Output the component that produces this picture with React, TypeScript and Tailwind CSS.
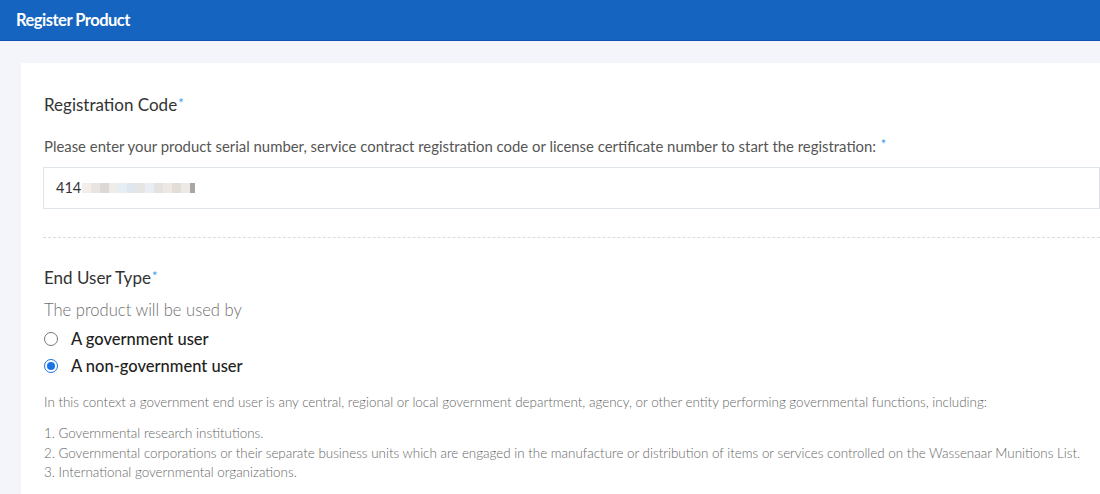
import React from "react";

const Star = () => (
  <span className="text-[#3d9bf0] text-[13px] align-top relative -top-[2px] ml-[1px]">*</span>
);

function Radio({ checked }: { checked: boolean }) {
  return checked ? (
    <span className="w-[14px] h-[14px] rounded-full border-[1.5px] border-[#1a73e8] flex items-center justify-center shrink-0">
      <span className="w-[8px] h-[8px] rounded-full bg-[#1a73e8]" />
    </span>
  ) : (
    <span className="w-[14px] h-[14px] rounded-full border-[1.5px] border-[#767676] shrink-0" />
  );
}

export default function App() {
  return (
    <div className="w-[1100px] h-[494px] overflow-hidden bg-[#f4f5fa] font-['Lato','Liberation_Sans',sans-serif]">
      <div className="h-[41px] bg-[#1565c0] border-b border-[#0d55b0] flex items-center px-4">
        <span className="text-white text-[16.5px] font-bold tracking-[-0.5px]">Register Product</span>
      </div>
      <div className="pl-[21px] pt-[22px]">
        <div className="bg-white pl-[23px] pt-[31px] pb-6 min-h-[500px]">
          <div className="text-[17px] text-[#333] leading-[22px]">
            Registration Code<Star />
          </div>
          <div className="mt-[20px] text-[14.9px] text-[#555] leading-[20px]">
            Please enter your product serial number, service contract registration code or license certificate number to start the registration:{" "}
            <Star />
          </div>
          <div className="mt-[11px] -ml-[1px] h-[42px] border border-[#dfe3ea] flex items-center pl-[12px] text-[14.5px] text-[#333]">
            <span>414</span>
            <span className="flex h-[10px] ml-[1px]">
              <span className="w-[9px] bg-[#f3eee9]" />
              <span className="w-[9px] bg-[#e9e5e3]" />
              <span className="w-[9px] bg-[#dcd8d6]" />
              <span className="w-[9px] bg-[#efede9]" />
              <span className="w-[9px] bg-[#e6eef5]" />
              <span className="w-[9px] bg-[#dfe6ee]" />
              <span className="w-[9px] bg-[#e7e5e3]" />
              <span className="w-[9px] bg-[#e9eef4]" />
              <span className="w-[9px] bg-[#e4e3e1]" />
              <span className="w-[9px] bg-[#ede8e3]" />
              <span className="w-[9px] bg-[#e2ddd7]" />
              <span className="w-[9px] bg-[#ece9e6]" />
              <span className="w-[5px] bg-[#a9a6a4]" />
            </span>
          </div>
          <div className="mt-[28px] -ml-[1px] border-t border-dashed border-[#dcdcdc]" />
          <div className="mt-[29px] text-[17px] text-[#333] leading-[22px]">
            End User Type<Star />
          </div>
          <div className="mt-[10px] text-[16.6px] font-light text-[#6f6f6f] leading-[22px]">
            The product will be used by
          </div>
          <div className="mt-[7px] flex items-center gap-[13px] h-[22px]">
            <Radio checked={false} />
            <span className="text-[16.5px] text-[#222] font-medium">A government user</span>
          </div>
          <div className="mt-[5px] flex items-center gap-[13px] h-[22px]">
            <Radio checked={true} />
            <span className="text-[16.5px] text-[#222] font-medium">A non-government user</span>
          </div>
          <div className="mt-[16px] text-[13.4px] font-light text-[#666] leading-[18px]">
            In this context a government end user is any central, regional or local government department, agency, or other entity performing governmental functions, including:
          </div>
          <div className="mt-[13px] text-[13.4px] font-light text-[#666] leading-[19.5px]">
            <div>1. Governmental research institutions.</div>
            <div>2. Governmental corporations or their separate business units which are engaged in the manufacture or distribution of items or services controlled on the Wassenaar Munitions List.</div>
            <div>3. International governmental organizations.</div>
          </div>
        </div>
      </div>
    </div>
  );
}
